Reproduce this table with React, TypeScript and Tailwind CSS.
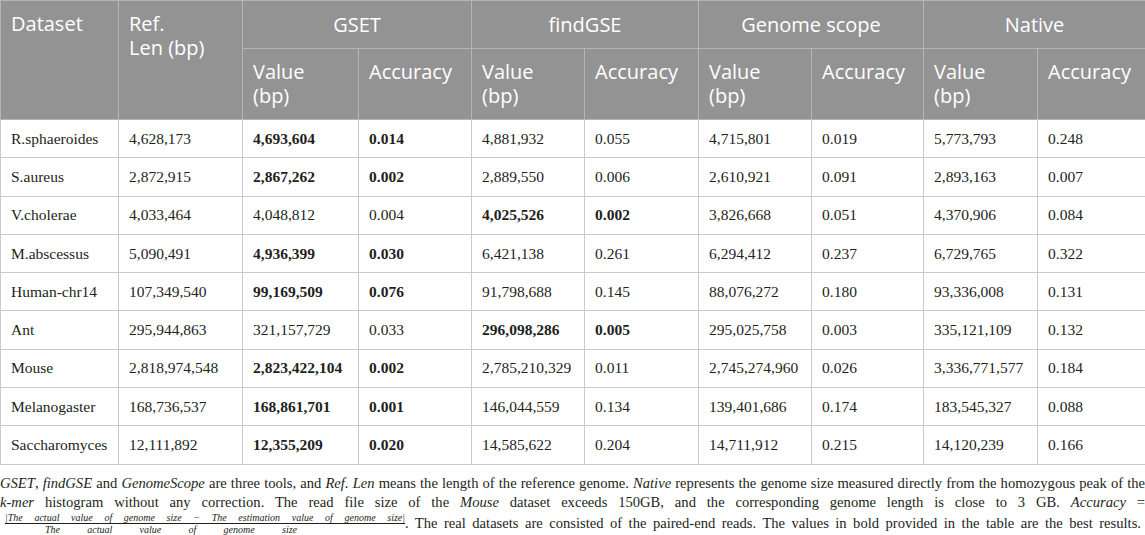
const rows: [string, string, string, string, string, string, string, string, string, string][] = [
  ["R.sphaeroides", "4,628,173", "4,693,604", "0.014", "4,881,932", "0.055", "4,715,801", "0.019", "5,773,793", "0.248"],
  ["S.aureus", "2,872,915", "2,867,262", "0.002", "2,889,550", "0.006", "2,610,921", "0.091", "2,893,163", "0.007"],
  ["V.cholerae", "4,033,464", "4,048,812", "0.004", "4,025,526", "0.002", "3,826,668", "0.051", "4,370,906", "0.084"],
  ["M.abscessus", "5,090,491", "4,936,399", "0.030", "6,421,138", "0.261", "6,294,412", "0.237", "6,729,765", "0.322"],
  ["Human-chr14", "107,349,540", "99,169,509", "0.076", "91,798,688", "0.145", "88,076,272", "0.180", "93,336,008", "0.131"],
  ["Ant", "295,944,863", "321,157,729", "0.033", "296,098,286", "0.005", "295,025,758", "0.003", "335,121,109", "0.132"],
  ["Mouse", "2,818,974,548", "2,823,422,104", "0.002", "2,785,210,329", "0.011", "2,745,274,960", "0.026", "3,336,771,577", "0.184"],
  ["Melanogaster", "168,736,537", "168,861,701", "0.001", "146,044,559", "0.134", "139,401,686", "0.174", "183,545,327", "0.088"],
  ["Saccharomyces", "12,111,892", "12,355,209", "0.020", "14,585,622", "0.204", "14,711,912", "0.215", "14,120,239", "0.166"],
]

// which tool columns are bold per row (index of value column)
const bestCol = [2, 2, 4, 2, 2, 4, 2, 2, 2]

const widths = [118, 124, 116, 113, 113, 114, 113, 112, 114, 108]
const tools = ["GSET", "findGSE", "Genome scope", "Native"]

export default function App() {
  const th = "border border-[#b4b4b4] px-[10px] pt-[11px] pb-[11px] text-left align-top font-normal leading-[24px]"
  return (
    <div className="w-[1145px] h-[535px] overflow-hidden bg-white text-[#231f20]">
      <table className="border-collapse table-fixed w-[1145px]">
        <colgroup>
          {widths.map((w, i) => (
            <col key={i} style={{ width: w }} />
          ))}
        </colgroup>
        <thead className="bg-[#939393] text-white text-[20px] font-['Open_Sans',sans-serif]">
          <tr className="h-[48px]">
            <th rowSpan={2} className={th}>Dataset</th>
            <th rowSpan={2} className={th}>Ref.<br />Len (bp)</th>
            {tools.map((t) => (
              <th key={t} colSpan={2} className="border border-[#b4b4b4] font-normal text-center align-middle leading-[24px]">
                {t}
              </th>
            ))}
          </tr>
          <tr className="h-[70px]">
            {tools.map((t) => [
              <th key={t + "v"} className={th}>Value<br />(bp)</th>,
              <th key={t + "a"} className={th}>Accuracy</th>,
            ])}
          </tr>
        </thead>
        <tbody className="font-['Liberation_Serif',serif] text-[15.5px]">
          {rows.map((r, ri) => (
            <tr key={ri} className="h-[38.3px]">
              {r.map((c, ci) => (
                <td
                  key={ci}
                  className={
                    "border border-[#cbcbcb] px-[10px] py-0 leading-[20px] align-middle" +
                    (ci === bestCol[ri] || ci === bestCol[ri] + 1 ? " font-bold" : "")
                  }
                >
                  {c}
                </td>
              ))}
            </tr>
          ))}
        </tbody>
      </table>

      {/* Footnote */}
      <div className="pt-[9px] font-['Liberation_Serif',serif] text-[14.6px] leading-[19px] text-[#231f20]">
        <div className="text-justify [text-align-last:justify]">
          <i>GSET</i>, <i>findGSE</i> and <i>GenomeScope</i> are three tools, and <i>Ref. Len</i> means the length of the reference genome. <i>Native</i> represents the genome size measured directly from the homozygous peak of the
        </div>
        <div className="text-justify [text-align-last:justify]">
          <i>k-mer</i> histogram without any correction. The read file size of the <i>Mouse</i> dataset exceeds 150GB, and the corresponding genome length is close to 3 GB. <i>Accuracy</i> =
        </div>
        <div className="flex items-center">
          <span className="inline-flex flex-col ml-[5px] w-[400px] text-[10px] leading-[11px] italic shrink-0">
            <span className="border-b border-[#231f20] text-justify [text-align-last:justify]">
              |The actual value of genome size − The estimation value of genome size|
            </span>
            <span className="pl-[40px] pr-[108px] text-justify [text-align-last:justify]">
              The actual value of genome size
            </span>
          </span>
          <span className="flex-1 pr-[4px] text-justify [text-align-last:justify]">
            . The real datasets are consisted of the paired-end reads. The values in bold provided in the table are the best results.
          </span>
        </div>
      </div>
    </div>
  )
}
